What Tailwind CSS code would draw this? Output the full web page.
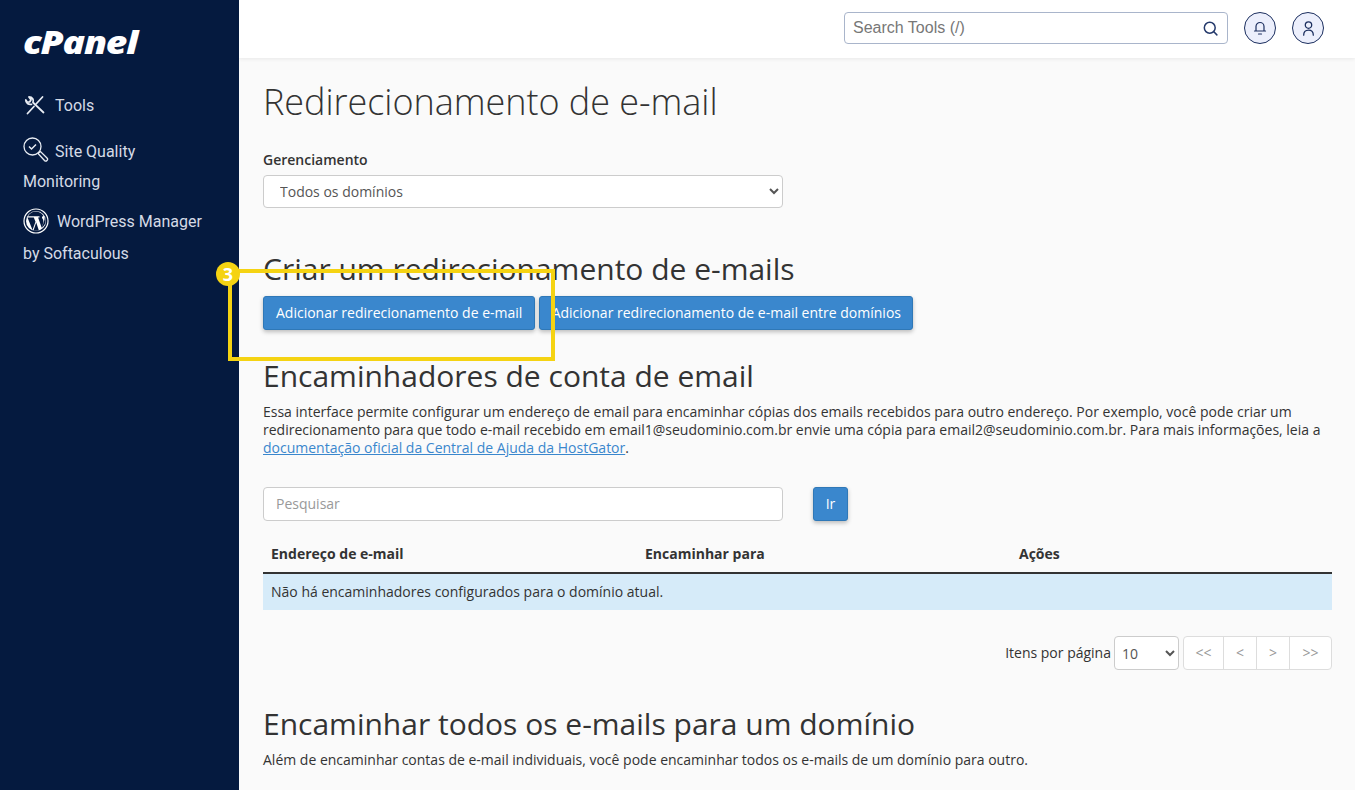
<!DOCTYPE html>
<html lang="pt-BR">
<head>
  <meta charset="UTF-8" />
  <meta name="viewport" content="width=device-width, initial-scale=1.0" />
  <title>Redirecionamento de e-mail</title>
  <script src="https://cdn.jsdelivr.net/npm/@tailwindcss/browser@4"></script>
</head>
<body class="relative h-[790px] overflow-hidden bg-[#fafafa] font-['Open_Sans',sans-serif] text-[14px] text-[#333]">
  <div class="flex h-full">

    <!-- Sidebar -->
    <aside class="w-[239px] shrink-0 bg-[#051a3f] pl-[23px] font-['Roboto',sans-serif] text-[16px] text-[#d5dbe6]">
      <div class="h-[88px] origin-left scale-x-[1.2] pt-[22px] font-['Open_Sans',sans-serif] text-[31px] leading-[40px] font-extrabold italic tracking-[-1px] text-white">cPanel</div>
      <a class="flex h-[34px] items-center gap-[9px] pl-px">
        <svg class="h-[22px] w-[22px]" viewBox="0 0 22 22" fill="none" stroke="#e8ecf3" stroke-width="1.800" stroke-linecap="round" stroke-linejoin="round">
          <path d="M3.500 19.500l6.500-7M12.500 9.500L18.500 3M19.500 18.500L9 8.500C10 6 8.500 3 5 3l2 2.800-1.200 2-2.600.4L1.800 6c0 3 2.700 5 5.700 4.300"/>
        </svg>
        <span class="mt-px">Tools</span>
      </a>
      <div class="mt-[15px] leading-[30px]">
        <svg class="mr-[6px] inline-block h-[26px] w-[26px] align-[-6px]" viewBox="0 0 26 26" fill="none" stroke="#e8ecf3" stroke-width="1.300">
          <circle cx="9.500" cy="9.500" r="8.500"/>
          <path d="M6 9.500l2.500 2.500 4.500-4.500" stroke-width="1.500"/>
          <path d="M15.500 16l2-1.500 6.500 6.500a1.500 1.500 0 0 1-2.500 2.500L15.500 17z"/>
        </svg>Site Quality<br />Monitoring
      </div>
      <div class="mt-[9px] leading-[32px]">
        <svg class="mr-[8px] inline-block h-[26px] w-[26px] align-[-7px]" viewBox="0 0 26 26">
          <circle cx="13" cy="13" r="12" fill="none" stroke="#fff" stroke-width="1.200"/>
          <circle cx="13" cy="13" r="10" fill="#fff"/>
          <path fill="#051a3f" d="M4.500 9.500L9.500 22 12.500 13.800 10.800 9.500zM9.500 8.300h7v1.200h-1.400l3.600 10.300 1.500-5c.6-2.200-.3-3.400-1-4.500-.6-.9.100-2.300 1.300-2.300C18.500 4.700 15 3.600 13 3.600c-3.500 0-6.500 1.900-8 4.700h4.500zM13.200 14.500l-2.700 8c1.700.5 3.500.4 5.300-.2zM21.700 9c.3 2.900-1.400 6-2.900 10.700 3.500-2.300 5-7 2.900-10.700z"/>
        </svg>WordPress Manager<br />by Softaculous
      </div>
    </aside>

    <div class="min-w-0 flex-1">
      <!-- Top bar -->
      <header class="flex h-[58px] items-center justify-end gap-[16px] bg-white pr-[31px] pb-[2px] shadow-[0_1px_4px_rgba(0,0,0,0.08)]">
        <div class="flex h-[32px] w-[384px] items-center justify-between rounded-[4px] border border-[#a9b5cb] pr-[9px] pl-[8px] font-['Liberation_Sans',sans-serif] text-[16px] text-[#777]">
          <span>Search Tools (/)</span>
          <svg class="h-[15px] w-[15px]" viewBox="0 0 16 16" fill="none" stroke="#24396b" stroke-width="1.600" stroke-linecap="round">
            <circle cx="7.200" cy="7.200" r="5.800"/><path d="M11.300 11.300L14.800 14.800"/>
          </svg>
        </div>
        <div class="flex h-[32px] w-[32px] items-center justify-center rounded-full border border-[#1c2f5f] bg-[#eceffc]">
          <svg class="h-[14px] w-[14px]" viewBox="0 0 14 14" fill="none" stroke="#1c2f5f" stroke-width="1.200" stroke-linecap="round">
            <path d="M3 10V5.500a4 4 0 0 1 8 0V10M1.500 10h11M5.500 13h3"/>
          </svg>
        </div>
        <div class="flex h-[32px] w-[32px] items-center justify-center rounded-full border border-[#1c2f5f] bg-[#eceffc]">
          <svg class="h-[15px] w-[15px]" viewBox="0 0 14 14" fill="none" stroke="#1c2f5f" stroke-width="1.200" stroke-linecap="round">
            <circle cx="7" cy="3.800" r="3"/><path d="M2.500 13.200c0-3 1.500-4.700 4.500-4.700s4.500 1.700 4.500 4.700"/>
          </svg>
        </div>
      </header>

      <!-- Content -->
      <main class="pr-[23px] pl-[24px]">
        <h1 class="mt-[19px] text-[36px] leading-[50px] font-light tracking-[-0.04px]">Redirecionamento de e-mail</h1>

        <label class="mt-[23px] block leading-[20px] font-semibold">Gerenciamento</label>
        <select class="mt-[5px] block h-[33px] w-[520px] rounded-[4px] border border-[#ccc] bg-white pl-[12px] text-[#555]">
          <option>Todos os domínios</option>
        </select>

        <h2 class="mt-[41px] text-[30px] leading-[40px]">Criar um redirecionamento de e-mails</h2>
        <div class="mt-[7px] flex gap-[4px]">
          <button class="h-[34px] rounded-[3px] border border-[#2f78b7] bg-[#3a87cd] px-[12px] pb-[2px] text-white shadow-[0_2px_4px_rgba(0,0,0,0.25)]">Adicionar redirecionamento de e-mail</button>
          <button class="h-[34px] w-[374px] rounded-[3px] border border-[#2f78b7] bg-[#3a87cd] pb-[2px] text-white shadow-[0_2px_4px_rgba(0,0,0,0.25)]">Adicionar redirecionamento de e-mail entre domínios</button>
        </div>

        <h2 class="mt-[26px] text-[30px] leading-[40px]">Encaminhadores de conta de email</h2>
        <p class="mt-[7px] leading-[18px]">Essa interface permite configurar um endereço de email para encaminhar cópias dos emails recebidos para outro endereço. Por exemplo, você pode criar um redirecionamento para que todo e-mail recebido em email1@seudominio.com.br envie uma cópia para email2@seudominio.com.br. Para mais informações, leia a <a class="text-[#3a87cd] underline">documentação oficial da Central de Ajuda da HostGator</a>.</p>

        <div class="mt-[30px] flex gap-[30px]">
          <div class="flex h-[34px] w-[520px] items-center rounded-[4px] border border-[#ccc] bg-white pb-[2px] pl-[12px] text-[#999]">Pesquisar</div>
          <button class="h-[34px] w-[35px] rounded-[3px] border border-[#2f78b7] bg-[#3a87cd] pb-[2px] text-white shadow-[0_2px_4px_rgba(0,0,0,0.25)]">Ir</button>
        </div>

        <table class="mt-[14px] w-full table-fixed">
          <thead>
            <tr class="h-[38px] border-b-2 border-[#333] text-left">
              <th class="w-[374px] pl-[8px] font-bold">Endereço de e-mail</th>
              <th class="w-[374px] pl-[8px] font-bold">Encaminhar para</th>
              <th class="pl-[8px] font-bold">Ações</th>
            </tr>
          </thead>
          <tbody>
            <tr class="h-[37px] bg-[#d6ebf9]">
              <td colspan="3" class="pb-[2px] pl-[8px]">Não há encaminhadores configurados para o domínio atual.</td>
            </tr>
          </tbody>
        </table>

        <div class="mt-[26px] flex items-center justify-end">
          <span class="pb-[2px]">Itens por página</span>
          <select class="ml-[3px] h-[34px] w-[65px] rounded-[4px] border border-[#ccc] bg-white pl-[3px] text-[#555]">
            <option>10</option>
          </select>
          <div class="ml-[4px] flex h-[34px] rounded-[4px] border border-[#ddd] bg-white pb-[2px] text-[#999]">
            <span class="flex w-[40px] items-center justify-center border-r border-[#ddd] -mb-[2px] pb-[2px]">&lt;&lt;</span>
            <span class="flex w-[33px] items-center justify-center border-r border-[#ddd] -mb-[2px] pb-[2px]">&lt;</span>
            <span class="flex w-[33px] items-center justify-center border-r border-[#ddd] -mb-[2px] pb-[2px]">&gt;</span>
            <span class="flex w-[41px] items-center justify-center -mb-[2px] pb-[2px]">&gt;&gt;</span>
          </div>
        </div>

        <h2 class="mt-[34px] text-[30px] leading-[40px]">Encaminhar todos os e-mails para um domínio</h2>
        <p class="mt-[6px] leading-[20px]">Além de encaminhar contas de e-mail individuais, você pode encaminhar todos os e-mails de um domínio para outro.</p>
      </main>
    </div>
  </div>

  <!-- Step highlight -->
  <div class="absolute top-[269px] left-[228px] h-[92px] w-[327px] border-4 border-[#f5d312]"></div>
  <div class="absolute top-[262px] left-[216px] flex h-[24px] w-[24px] items-center justify-center rounded-full bg-[#f5d312] text-[18px] font-bold text-white">3</div>
</body>
</html>
